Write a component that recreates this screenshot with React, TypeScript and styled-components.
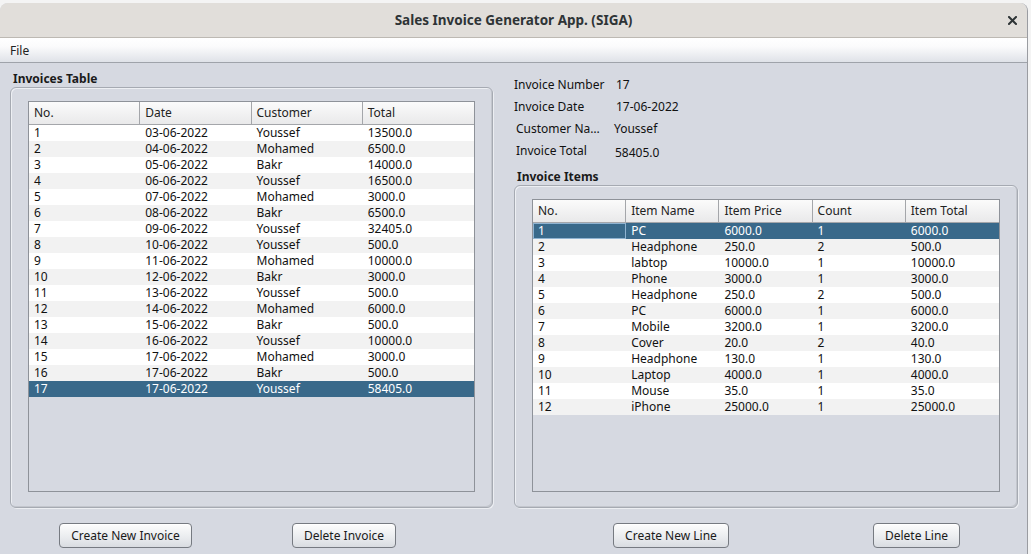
import React from "react";
import styled, { createGlobalStyle, css } from "styled-components";

const GlobalStyle = createGlobalStyle`
  html, body {
    margin: 0;
    padding: 0;
    background: #f4f4f4;
    font-family: "Noto Sans", "DejaVu Sans", sans-serif;
    font-size: 12px;
    color: #111;
  }
  * { box-sizing: border-box; }
`;

const SELECT_BG = "#39698a";

const Window = styled.div`
  margin: 3px 3px 0 0;
  height: 551px;
  display: flex;
  flex-direction: column;
  background: #d6d9e1;
  border-right: 1px solid #9a9ca1;
  border-radius: 8px 8px 0 0;
  overflow: hidden;
`;

const TitleBar = styled.div`
  height: 35px;
  flex: none;
  display: flex;
  align-items: center;
  justify-content: center;
  position: relative;
  background: #e1deda;
  border-bottom: 1px solid #bdb9b3;
`;

const Title = styled.div`
  font-weight: 700;
  font-size: 13.5px;
  color: #2e3436;
`;

const CloseButton = styled.div`
  position: absolute;
  right: 7px;
  top: 9px;
  width: 16px;
  height: 16px;
  display: flex;
  align-items: center;
  justify-content: center;
`;

const MenuBar = styled.div`
  height: 25px;
  flex: none;
  display: flex;
  align-items: center;
  padding-left: 10px;
  background: linear-gradient(#ffffff 0%, #fbfbfc 35%, #dfe2e8 100%);
  border-bottom: 1px solid #9fa3aa;
`;

const MenuItem = styled.span`
  font-size: 12px;
  color: #222;
`;

const Body = styled.div`
  flex: 1;
  display: grid;
  grid-template-columns: 494px 504px;
  column-gap: 10px;
  padding: 7px 0 6px 10px;
`;

const Column = styled.div`
  display: flex;
  flex-direction: column;
  min-height: 0;
`;

const GroupLabel = styled.div<{ $indent?: number }>`
  height: 17px;
  line-height: 17px;
  padding-left: ${(p) => p.$indent ?? 3}px;
  font-weight: 700;
  font-size: 12px;
  color: #1a1a1a;
`;

const GroupBox = styled.div<{ $width: number }>`
  flex: 1;
  width: ${(p) => p.$width}px;
  padding: 13px 17px 15px 17px;
  border: 1px solid #a6aab2;
  border-radius: 6px;
  box-shadow: inset 1px 1px 0 #edeff3, inset -1px -1px 0 #c3c6cd, 1px 1px 0 #eceef2;
  display: flex;
`;

const TableFrame = styled.div`
  flex: 1;
  border: 1px solid #8e9299;
  display: flex;
  flex-direction: column;
`;

const HeaderRow = styled.div<{ $cols: number }>`
  display: grid;
  grid-template-columns: repeat(${(p) => p.$cols}, 1fr);
  height: 23px;
  background: linear-gradient(#fbfbfb, #e9e9ea);
  border-bottom: 1px solid #a4a6aa;
`;

const HeaderCell = styled.div`
  padding-left: 5px;
  line-height: 22px;
  color: #222;
  border-right: 1px solid #a4a6aa;
  white-space: nowrap;
  overflow: hidden;
  &:last-child { border-right: none; }
`;

const Row = styled.div<{ $cols: number; $odd: boolean; $selected: boolean }>`
  display: grid;
  grid-template-columns: repeat(${(p) => p.$cols}, 1fr);
  height: 16px;
  background: ${(p) => (p.$odd ? "#f2f2f2" : "#ffffff")};
  color: #111;
  ${(p) =>
    p.$selected &&
    css`
      background: ${SELECT_BG};
      color: #ffffff;
    `}
`;

const Cell = styled.div<{ $focused?: boolean }>`
  padding-left: 5px;
  line-height: 16px;
  white-space: nowrap;
  overflow: hidden;
  ${(p) =>
    p.$focused &&
    css`
      padding-left: 4px;
      line-height: 14px;
      border: 1px solid #8fb3d1;
    `}
`;

const ButtonRow = styled.div<{ $indent: number; $gap: number }>`
  flex: none;
  display: flex;
  gap: ${(p) => p.$gap}px;
  padding-left: ${(p) => p.$indent}px;
  margin-top: 15px;
  height: 25px;
`;

const Button = styled.button<{ $width: number }>`
  width: ${(p) => p.$width}px;
  height: 25px;
  padding: 0;
  font-family: "Noto Sans", "DejaVu Sans", sans-serif;
  font-size: 12px;
  color: #1a1a1a;
  border: 1px solid #767a81;
  border-radius: 4px;
  background: linear-gradient(#fdfdfd, #e9ebee 60%, #d9dce1);
  box-shadow: inset 0 1px 0 #ffffff;
`;

const Fields = styled.div`
  padding-top: 3px;
  display: flex;
  flex-direction: column;
  margin-bottom: 7px;
`;

const FieldRow = styled.div<{ $shift?: number; $valueAt?: number; $valueDrop?: number }>`
  height: 22px;
  display: grid;
  grid-template-columns: ${(p) => (p.$valueAt ?? 102) - (p.$shift ?? 0)}px 1fr;
  padding-left: ${(p) => p.$shift ?? 0}px;
  align-items: center;
  & > span:last-child {
    position: relative;
    top: ${(p) => p.$valueDrop ?? 0}px;
  }
`;

const FieldLabel = styled.span<{ $clip?: number }>`
  white-space: nowrap;
  color: #111;
  ${(p) =>
    p.$clip &&
    css`
      max-width: ${p.$clip}px;
      overflow: hidden;
      text-overflow: ellipsis;
    `}
`;

const FieldValue = styled.span`
  color: #111;
`;

type TableProps = {
  headers: string[];
  rows: string[][];
  selected: number;
  focusFirst?: boolean;
};

const DataTable = ({ headers, rows, selected, focusFirst }: TableProps) => (
  <TableFrame>
    <HeaderRow $cols={headers.length}>
      {headers.map((h) => (
        <HeaderCell key={h}>{h}</HeaderCell>
      ))}
    </HeaderRow>
    {rows.map((r, i) => (
      <Row key={i} $cols={headers.length} $odd={i % 2 === 1} $selected={i === selected}>
        {r.map((c, j) => (
          <Cell key={j} $focused={focusFirst && i === selected && j === 0}>
            {c}
          </Cell>
        ))}
      </Row>
    ))}
  </TableFrame>
);

const invoices: string[][] = [
  ["1", "03-06-2022", "Youssef", "13500.0"],
  ["2", "04-06-2022", "Mohamed", "6500.0"],
  ["3", "05-06-2022", "Bakr", "14000.0"],
  ["4", "06-06-2022", "Youssef", "16500.0"],
  ["5", "07-06-2022", "Mohamed", "3000.0"],
  ["6", "08-06-2022", "Bakr", "6500.0"],
  ["7", "09-06-2022", "Youssef", "32405.0"],
  ["8", "10-06-2022", "Youssef", "500.0"],
  ["9", "11-06-2022", "Mohamed", "10000.0"],
  ["10", "12-06-2022", "Bakr", "3000.0"],
  ["11", "13-06-2022", "Youssef", "500.0"],
  ["12", "14-06-2022", "Mohamed", "6000.0"],
  ["13", "15-06-2022", "Bakr", "500.0"],
  ["14", "16-06-2022", "Youssef", "10000.0"],
  ["15", "17-06-2022", "Mohamed", "3000.0"],
  ["16", "17-06-2022", "Bakr", "500.0"],
  ["17", "17-06-2022", "Youssef", "58405.0"],
];

const items: string[][] = [
  ["1", "PC", "6000.0", "1", "6000.0"],
  ["2", "Headphone", "250.0", "2", "500.0"],
  ["3", "labtop", "10000.0", "1", "10000.0"],
  ["4", "Phone", "3000.0", "1", "3000.0"],
  ["5", "Headphone", "250.0", "2", "500.0"],
  ["6", "PC", "6000.0", "1", "6000.0"],
  ["7", "Mobile", "3200.0", "1", "3200.0"],
  ["8", "Cover", "20.0", "2", "40.0"],
  ["9", "Headphone", "130.0", "1", "130.0"],
  ["10", "Laptop", "4000.0", "1", "4000.0"],
  ["11", "Mouse", "35.0", "1", "35.0"],
  ["12", "iPhone", "25000.0", "1", "25000.0"],
];

export default function App() {
  return (
    <>
      <GlobalStyle />
      <Window>
        <TitleBar>
          <Title>Sales Invoice Generator App. (SIGA)</Title>
          <CloseButton>
            <svg width="9" height="9" viewBox="0 0 9 9">
              <path d="M1 1L8 8M8 1L1 8" stroke="#2e3436" strokeWidth="2" strokeLinecap="square" />
            </svg>
          </CloseButton>
        </TitleBar>
        <MenuBar>
          <MenuItem>File</MenuItem>
        </MenuBar>
        <Body>
          <Column>
            <GroupLabel>Invoices Table</GroupLabel>
            <GroupBox $width={483}>
              <DataTable headers={["No.", "Date", "Customer", "Total"]} rows={invoices} selected={16} />
            </GroupBox>
            <ButtonRow $indent={49} $gap={100}>
              <Button $width={133}>Create New Invoice</Button>
              <Button $width={104}>Delete Invoice</Button>
            </ButtonRow>
          </Column>
          <Column>
            <Fields>
              <FieldRow>
                <FieldLabel>Invoice Number</FieldLabel>
                <FieldValue>17</FieldValue>
              </FieldRow>
              <FieldRow>
                <FieldLabel>Invoice Date</FieldLabel>
                <FieldValue>17-06-2022</FieldValue>
              </FieldRow>
              <FieldRow $shift={2} $valueAt={100}>
                <FieldLabel $clip={88}>Customer Name</FieldLabel>
                <FieldValue>Youssef</FieldValue>
              </FieldRow>
              <FieldRow $shift={2} $valueAt={101} $valueDrop={2}>
                <FieldLabel>Invoice Total</FieldLabel>
                <FieldValue>58405.0</FieldValue>
              </FieldRow>
            </Fields>
            <GroupLabel>Invoice Items</GroupLabel>
            <GroupBox $width={504}>
              <DataTable
                headers={["No.", "Item Name", "Item Price", "Count", "Item Total"]}
                rows={items}
                selected={0}
                focusFirst
              />
            </GroupBox>
            <ButtonRow $indent={99} $gap={144}>
              <Button $width={116}>Create New Line</Button>
              <Button $width={87}>Delete Line</Button>
            </ButtonRow>
          </Column>
        </Body>
      </Window>
    </>
  );
}
